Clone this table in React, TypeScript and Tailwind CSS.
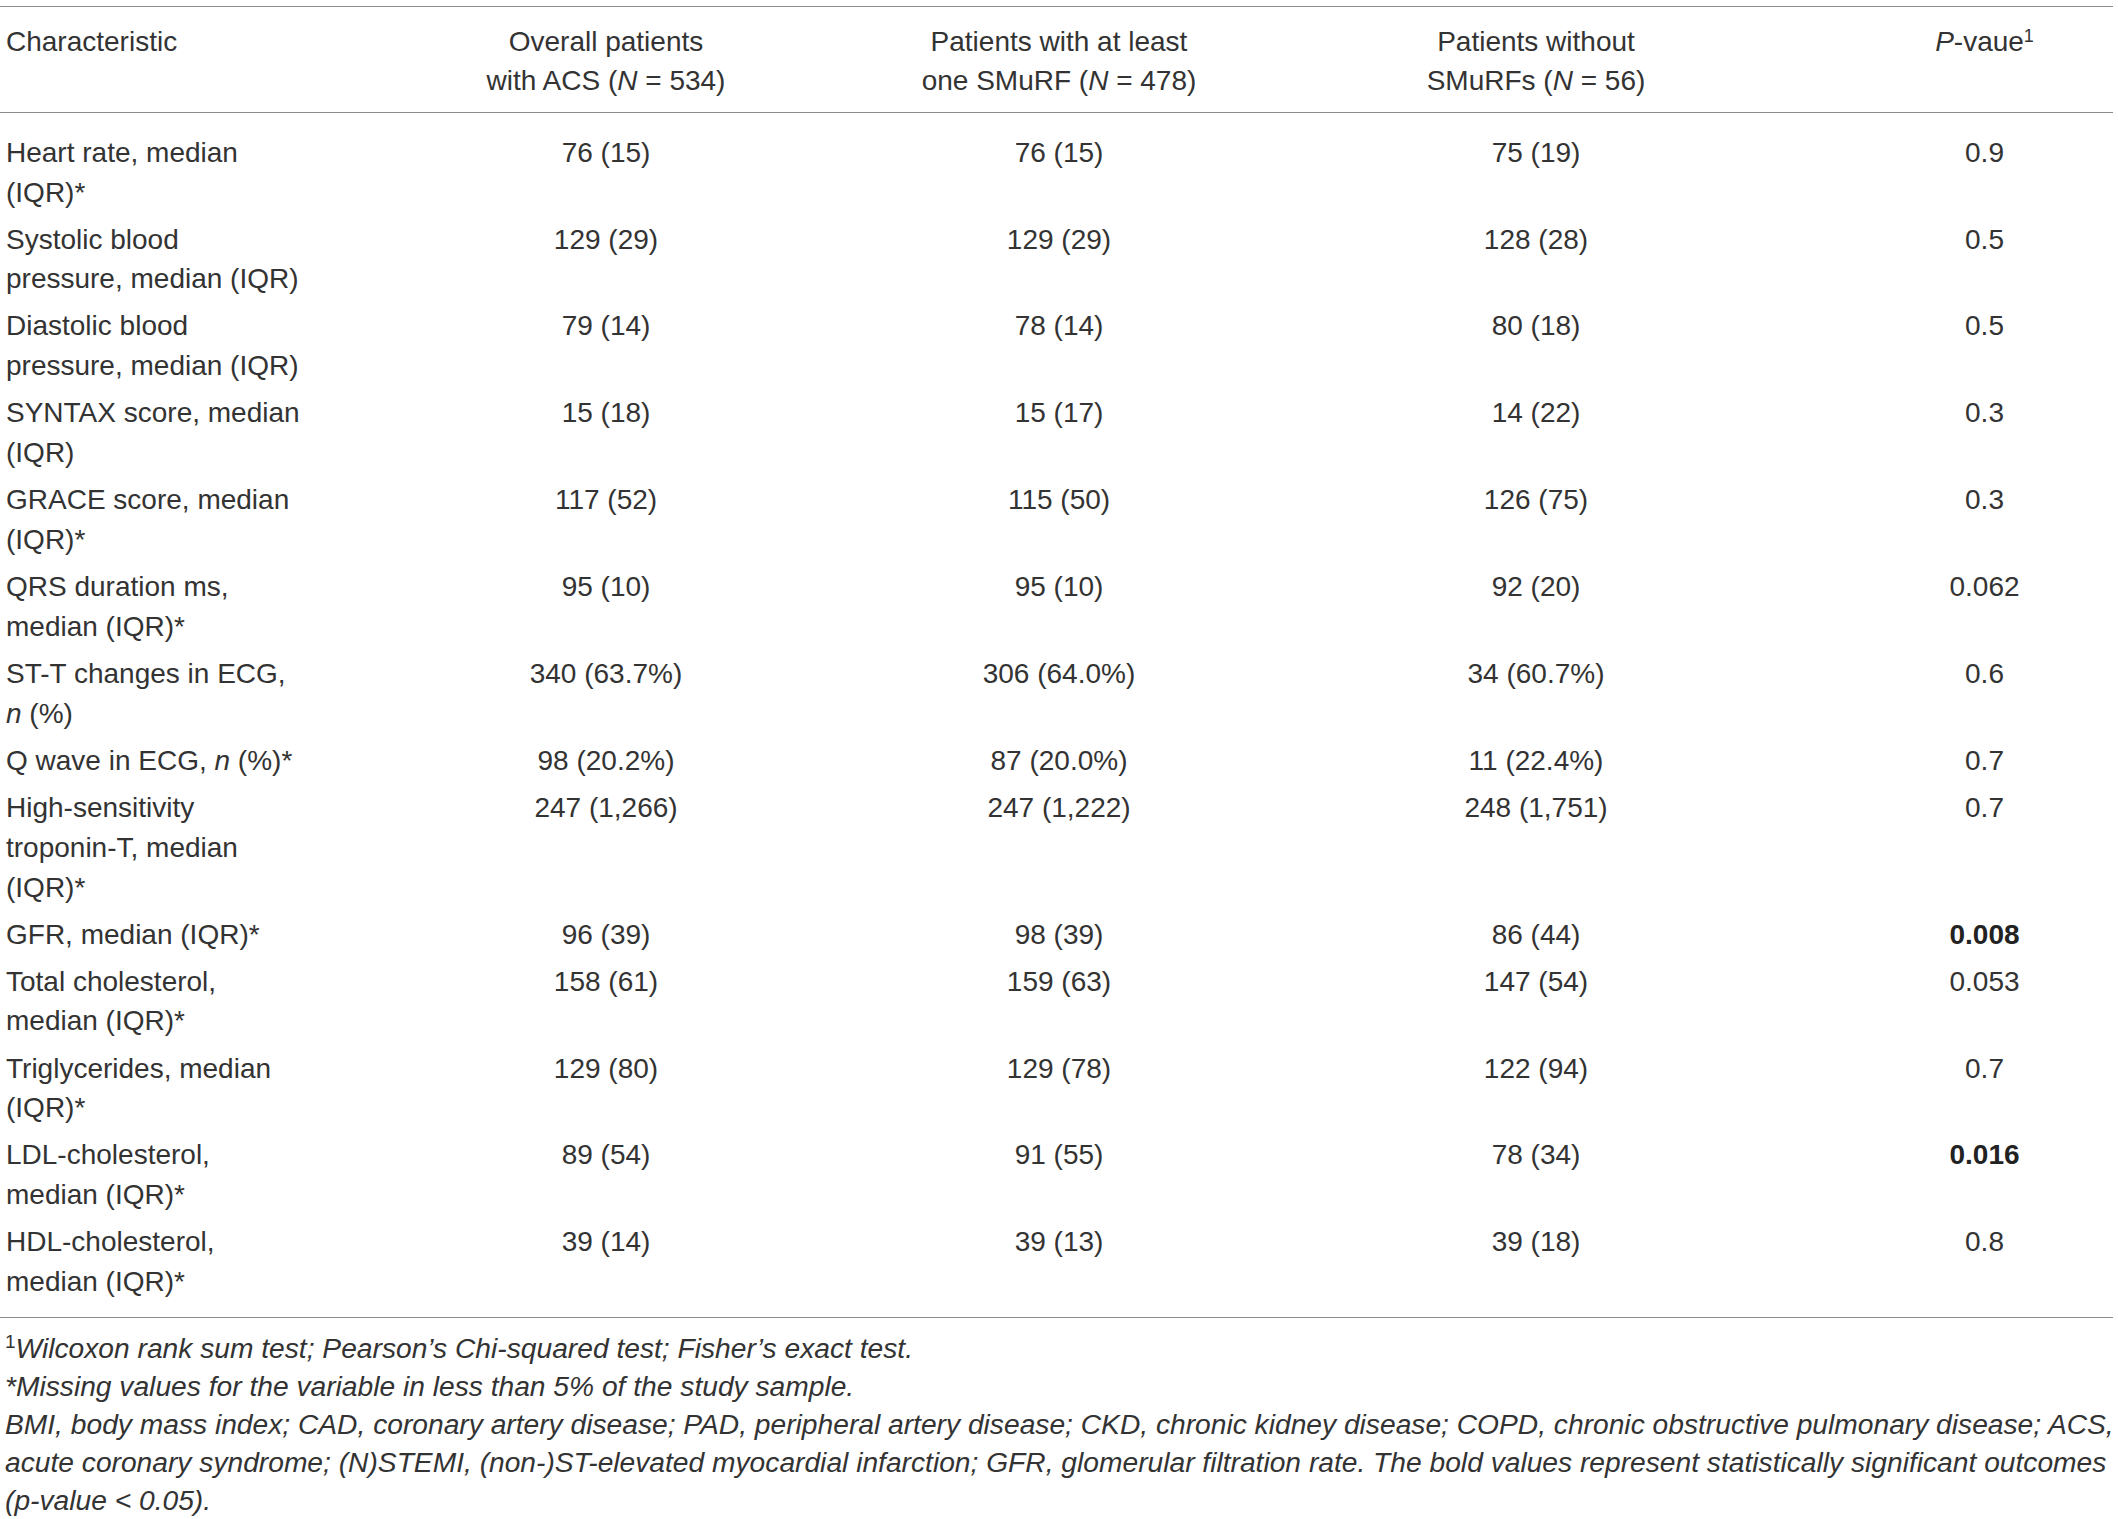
import React from 'react';

type Row = {
  label: React.ReactNode[];
  values: string[];
  p: string;
  bold?: boolean;
};

const rows: Row[] = [
  { label: ['Heart rate, median', '(IQR)*'], values: ['76 (15)', '76 (15)', '75 (19)'], p: '0.9' },
  { label: ['Systolic blood', 'pressure, median (IQR)'], values: ['129 (29)', '129 (29)', '128 (28)'], p: '0.5' },
  { label: ['Diastolic blood', 'pressure, median (IQR)'], values: ['79 (14)', '78 (14)', '80 (18)'], p: '0.5' },
  { label: ['SYNTAX score, median', '(IQR)'], values: ['15 (18)', '15 (17)', '14 (22)'], p: '0.3' },
  { label: ['GRACE score, median', '(IQR)*'], values: ['117 (52)', '115 (50)', '126 (75)'], p: '0.3' },
  { label: ['QRS duration ms,', 'median (IQR)*'], values: ['95 (10)', '95 (10)', '92 (20)'], p: '0.062' },
  {
    label: ['ST-T changes in ECG,', <><i>n</i> (%)</>],
    values: ['340 (63.7%)', '306 (64.0%)', '34 (60.7%)'],
    p: '0.6',
  },
  {
    label: [<>Q wave in ECG, <i>n</i> (%)*</>],
    values: ['98 (20.2%)', '87 (20.0%)', '11 (22.4%)'],
    p: '0.7',
  },
  {
    label: ['High-sensitivity', 'troponin-T, median', '(IQR)*'],
    values: ['247 (1,266)', '247 (1,222)', '248 (1,751)'],
    p: '0.7',
  },
  { label: ['GFR, median (IQR)*'], values: ['96 (39)', '98 (39)', '86 (44)'], p: '0.008', bold: true },
  { label: ['Total cholesterol,', 'median (IQR)*'], values: ['158 (61)', '159 (63)', '147 (54)'], p: '0.053' },
  { label: ['Triglycerides, median', '(IQR)*'], values: ['129 (80)', '129 (78)', '122 (94)'], p: '0.7' },
  { label: ['LDL-cholesterol,', 'median (IQR)*'], values: ['89 (54)', '91 (55)', '78 (34)'], p: '0.016', bold: true },
  { label: ['HDL-cholesterol,', 'median (IQR)*'], values: ['39 (14)', '39 (13)', '39 (18)'], p: '0.8' },
];

const cols = 'grid grid-cols-[310px_592px_314px_640px_257px]';

export default function App() {
  return (
    <div className="w-[2118px] min-h-[1519px] bg-white font-['Liberation_Sans',Arial,sans-serif] text-[28px] leading-[39.8px] text-[#333333]">
      <div className="w-[2113px] pt-[6px]">
        <div className="border-t-[1.5px] border-b-[1.5px] border-[#8c8c8c]">
          {/* header */}
          <div className={`${cols} pt-[14.5px] pb-[10.5px]`}>
            <div className="pl-[6px] whitespace-nowrap">Characteristic</div>
            <div className="text-center whitespace-nowrap">
              Overall patients
              <br />
              with ACS (<i>N</i> = 534)
            </div>
            <div className="text-center whitespace-nowrap">
              Patients with at least
              <br />
              one SMuRF (<i>N</i> = 478)
            </div>
            <div className="text-center whitespace-nowrap">
              Patients without
              <br />
              SMuRFs (<i>N</i> = 56)
            </div>
            <div className="text-center whitespace-nowrap">
              <i>P</i>-vaue<sup className="text-[18px]">1</sup>
            </div>
          </div>
        </div>

        {/* body */}
        <div className="pt-[16.5px] pb-[11px] border-b-[1.5px] border-[#8c8c8c]">
          {rows.map((r, i) => (
            <div key={i} className={`${cols} py-[3.65px]`}>
              <div className="pl-[6px] whitespace-nowrap">
                {r.label.map((l, j) => (
                  <div key={j}>{l}</div>
                ))}
              </div>
              {r.values.map((v, j) => (
                <div key={j} className="text-center whitespace-nowrap">
                  {v}
                </div>
              ))}
              <div className={`text-center whitespace-nowrap ${r.bold ? 'font-bold text-[#222222]' : ''}`}>{r.p}</div>
            </div>
          ))}
        </div>

        {/* footnotes */}
        <div className="pt-[11px] pl-[5px] text-[28.2px] leading-[38.2px] italic whitespace-nowrap">
          <div>
            <sup className="not-italic text-[19px]">1</sup>Wilcoxon rank sum test; Pearson’s Chi-squared test; Fisher’s exact test.
          </div>
          <div>*Missing values for the variable in less than 5% of the study sample.</div>
          <div>
            BMI, body mass index; CAD, coronary artery disease; PAD, peripheral artery disease; CKD, chronic kidney disease; COPD, chronic obstructive pulmonary disease; ACS,
          </div>
          <div>
            acute coronary syndrome; (N)STEMI, (non-)ST-elevated myocardial infarction; GFR, glomerular filtration rate. The bold values represent statistically significant outcomes
          </div>
          <div>(p-value &lt; 0.05).</div>
        </div>
      </div>
    </div>
  );
}
